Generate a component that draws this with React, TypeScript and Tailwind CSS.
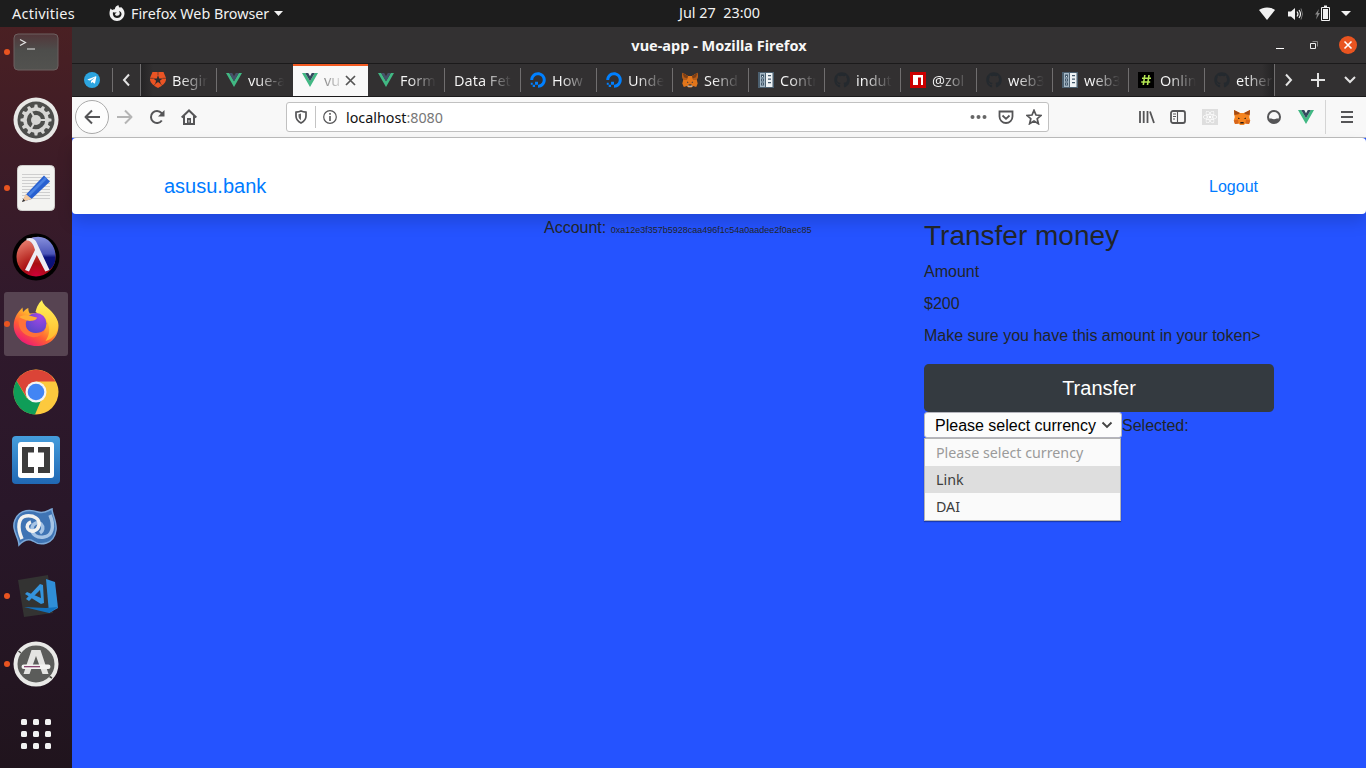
import React from "react";
import { FaDigitalOcean, FaGithub, FaReact, FaTelegramPlane } from "react-icons/fa";

const UI = "font-['Noto_Sans',sans-serif]";

function Vue({ dim = false }: { dim?: boolean }) {
  return (
    <svg width="16" height="16" viewBox="0 0 16 16" className="block shrink-0">
      <path d="M0 1h3.2L8 9.3 12.8 1H16L8 15z" fill="#41b883" />
      <path d="M3.2 1H6.2L8 4.2 9.8 1h3L8 9.3z" fill={dim ? "#45526a" : "#34495e"} />
    </svg>
  );
}

function Fox() {
  return (
    <svg width="16" height="16" viewBox="0 0 16 16" className="block shrink-0">
      <path d="M.5.8 6 4h4L15.500.8l.3 3.700-1 3.500.9 3.500-1.500 3.500-3.200-.9-1.500 1.400h-3l-1.500-1.400-3.200.9L.3 11.500 1.200 8 .2 4.500z" fill="#e2761b" />
      <path d="M.5.8 6 4 5 8 1.200 8 .2 4.500zM15.500.8 10 4l1 4 3.800 0 1-3.500z" fill="#b85d18" />
      <path d="M.5.8 6 4 5.300 6.500 2 5.300zM15.500.8 10 4l.7 2.500L14 5.300z" fill="#7d3f16" />
      <path d="M5 9.500 6.800 10.400 5 10.800zM11 9.500l-1.800.9 1.800.4z" fill="#233447" />
      <path d="M6 13h4l.5 1.900H5.500z" fill="#c0ad9e" />
      <path d="M6.600 12.500h2.800l.2 1H6.400z" fill="#26201c" />
    </svg>
  );
}

function FoxFace() {
  return (
    <svg width="18" height="16" viewBox="0 0 18 16" className="block shrink-0">
      <path d="M1 1l6 3h4l6-3 0 4-.8 3 1 3.500L16 15l-3.500-.6L10.800 16H7.200l-1.700-1.600L2 15 .8 11.500 1.800 8 1 5z" fill="#f5841f" />
      <path d="M1 1l6 3-1.500 1.200L1.500 6zM17 1l-6 3 1.500 1.200 4 .8z" fill="#a34b16" />
      <path d="M.8 11.500 5 10.500 5.500 14.400 2 15zM17.200 11.500l-4.200-1-.5 3.900 3.500.6z" fill="#d7651b" />
      <path d="M5 8.600 7.200 9.700 5.200 10zM13 8.600l-2.200 1.100 2 .3zM7.500 13h3l.4 1.600H7.100z" fill="#2b1c14" />
    </svg>
  );
}

function Auth0() {
  return (
    <svg width="16" height="16" viewBox="0 0 16 16" className="block shrink-0">
      <path d="M2.500 0h11L16 6c.6 4-2.500 7-8 10C2.500 13-.6 10 0 6z" fill="#eb5424" />
      <path d="M8 3 9.200 6.500h3.500L9.900 8.700l1.100 3.500L8 10l-3 2.200 1.100-3.500L3.300 6.500h3.500z" fill="#2f2d2e" />
      <path d="M0 6.300h3.500M16 6.300h-3.500M8 0v3M5 12.200 3.200 14M11 12.200l1.800 1.800" stroke="#2f2d2e" strokeWidth=".6" />
    </svg>
  );
}

function Docs() {
  return (
    <svg width="16" height="16" viewBox="0 0 16 16" className="block shrink-0">
      <path d="M0 0h16v16H0z" fill="#4c6070" />
      <path d="M2 1h5v14H2z" fill="#a5b8c6" />
      <path d="M8 1h6.500v14H8z" fill="#eef2f5" />
      <path d="M3 2.500h3v3H3zM3 6.500h3v3H3zM3 10.500h3v3H3zM10 3h3v1.300h-3zM10 6.500h3v1.300h-3zM10 10h3v1.300h-3z" fill="#41576a" />
      <path d="M4 4h1v1H4zM4 7.500h1v1H4zM4 11.500h1v1H4z" fill="#dce6ed" />
    </svg>
  );
}

function Npm() {
  return (
    <svg width="16" height="16" viewBox="0 0 16 16" className="block shrink-0">
      <path d="M0 0h16v16H0z" fill="#cb0000" />
      <path d="M3 3h10v10h-2V5.500H8V13H3z" fill="#fff" />
    </svg>
  );
}

function Hash() {
  return (
    <svg width="16" height="16" viewBox="0 0 16 16" className="block shrink-0">
      <path d="M0 0h16v16H0z" fill="#000" />
      <path d="M6.800 3 5.300 13M11 3 9.500 13M4 6.300h9M3.200 10h9" stroke="#b5e853" strokeWidth="1.600" />
    </svg>
  );
}

const ocean = <FaDigitalOcean size={16} color="#0080ff" />;
const hub = <FaGithub size={16} color="#24292e" />;

const tabs: { icon?: React.ReactNode; text: string; active?: boolean }[] = [
  { icon: <Auth0 />, text: "Begin" },
  { icon: <Vue dim />, text: "vue-a" },
  { icon: <Vue />, text: "vu", active: true },
  { icon: <Vue dim />, text: "Form" },
  { text: "Data Fet" },
  { icon: ocean, text: "How" },
  { icon: ocean, text: "Unde" },
  { icon: <Fox />, text: "Send" },
  { icon: <Docs />, text: "Contr" },
  { icon: hub, text: "indut" },
  { icon: <Npm />, text: "@zol" },
  { icon: hub, text: "web3" },
  { icon: <Docs />, text: "web3" },
  { icon: <Hash />, text: "Onlin" },
  { icon: hub, text: "ether" },
];

function TopBar() {
  return (
    <header className={`flex h-[27px] shrink-0 items-center bg-[#1d1d1d] text-[14.3px] text-[#f2f2f2] ${UI}`}>
      <div className="flex w-[679px] shrink-0 items-center">
        <span className="ml-3 w-[97px] whitespace-nowrap text-[14.500px] tracking-[0.25px]">Activities</span>
        <svg width="16" height="16" viewBox="0 0 16 16" className="mr-[6px] mb-px shrink-0">
          <path d="M1.500 3.500 3.200 5c1-.7 2-.9 2.600-.8C6 2.200 7.500.700 9.500 0 9.300 1.200 10 2 11 2.800l1-.8c2 1.500 3.600 3.800 3.500 6.500C15.300 12.800 12 16 8 16S.5 12.700.5 8.500C.5 6.500 1 5 1.500 3.500z" fill="#f2f2f2" />
          <path d="M4 7c1.200.8 2.300.5 3.500.3-.2 1-1.500 1.200-1.500 2.200C6.500 11 9 11.300 10.200 10c1-1.200.6-3-.4-4 2 .3 3 2 2.700 3.700-.4 2-2.200 3.300-4.500 3.300C5 13 3.300 10 4 7z" fill="#1d1d1d" />
        </svg>
        <span className="w-[138px] whitespace-nowrap">Firefox Web Browser</span>
        <svg width="9" height="5" viewBox="0 0 9 5" className="ml-[5px]"><path d="M0 0h9L4.500 5z" fill="#f2f2f2" /></svg>
      </div>
      <div className="flex-1 whitespace-pre pb-px text-[14.4px]">Jul 27  23:00</div>
      <div className="flex w-[107px] shrink-0 items-center">
        <svg width="16" height="13" viewBox="0 0 16 13"><path d="M0 3C4-.5 12-.5 16 3L8 13z" fill="#f2f2f2" /></svg>
        <svg width="15" height="14" viewBox="0 0 15 14" className="ml-[13px]">
          <path d="M0 4.500h3L7 1v12L3 9.500H0z" fill="#f2f2f2" />
          <path d="M9 4.500q2 2.500 0 5M11 3q3 4 0 8" fill="none" stroke="#f2f2f2" strokeWidth="1.200" />
          <path d="M13 1.500q3 5.500 0 11" fill="none" stroke="#777" />
        </svg>
        <svg width="15" height="16" viewBox="0 0 15 16" className="ml-3 mb-[2px]">
          <path d="M4 4 0 9.500h2l-1 5 4-6.500H3z" fill="#858585" />
          <path d="M6.500 2.500h8v13h-8z" fill="none" stroke="#f2f2f2" strokeWidth="1" />
          <path d="M9 .5h3v1.500H9zM8 4h5v10H8z" fill="#f2f2f2" />
        </svg>
        <svg width="10" height="5" viewBox="0 0 10 5" className="ml-[11px]"><path d="M0 0h10L5 5z" fill="#f2f2f2" /></svg>
      </div>
    </header>
  );
}

function DockItem({ children, dot, active }: { children: React.ReactNode; dot?: boolean; active?: boolean }) {
  return (
    <div className="flex h-[68px] w-[72px] shrink-0 items-center justify-center">
      <div className={`relative flex h-16 w-16 items-center justify-center rounded-[3px] ${active ? "bg-[#574452]" : ""}`}>
        {dot && <span className="absolute left-0 h-[6px] w-[6px] rounded-full bg-[#e95420]" />}
        {children}
      </div>
    </div>
  );
}

const teeth = Array.from({ length: 12 }, (_, i) => i * 30);

function Dock() {
  return (
    <aside className="w-[72px] shrink-0 overflow-hidden bg-[linear-gradient(180deg,#4a2023_0%,#3d1c27_18%,#30192c_38%,#291729_65%,#20141d_100%)]">
      <div className="-mt-[9px] flex flex-col">
        <DockItem dot>
          <svg width="46" height="38" viewBox="0 0 46 38">
            <defs><linearGradient id="term" x2="0" y2="1"><stop stopColor="#523639" /><stop offset=".45" stopColor="#4d4d4b" /><stop offset="1" stopColor="#52524f" /></linearGradient></defs>
            <rect x="1" y="1" width="44" height="36" rx="4" fill="url(#term)" stroke="#6d6060" />
            <path d="M7 6.500 12.500 9.500 7 12.500M14 16h8" fill="none" stroke="#e4e4e4" strokeWidth="1.200" />
          </svg>
        </DockItem>
        <DockItem>
          <svg width="46" height="46" viewBox="-23 -23 46 46">
            <circle r="22.500" fill="#e8e8e6" /><circle r="18.500" fill="#4d4e4c" />
            <circle r="11" fill="none" stroke="#d6d6d4" strokeWidth="3.500" />
            {teeth.map((a) => <path key={a} d="M-2-12-1.300-15.500h2.600L2-12z" fill="#d6d6d4" transform={`rotate(${a})`} />)}
            <circle r="5" fill="#d6d6d4" />
            <path d="M0 0H11M0 0-5.500-9.500M0 0-5.500 9.500" stroke="#d6d6d4" strokeWidth="2" />
          </svg>
        </DockItem>
        <DockItem dot>
          <svg width="38" height="46" viewBox="0 0 38 46">
            <rect x=".5" y=".5" width="37" height="45" rx="4" fill="#f3f3f1" stroke="#d0cfcd" />
            <path d="M5 9.500h28M5 12.500h28M5 15.500h28M5 18.500h28M5 21.500h28M5 24.500h28M5 27.500h28M5 30.500h28M5 33.500h28" stroke="#cecece" />
            <path d="m5 37 4-7.500L27 10.500l6 6L14.500 34z" fill="#2860d0" />
            <path d="m12 30 17-17" stroke="#4880e2" strokeWidth="2.500" /><path d="m5 37 3.800-8 6 5z" fill="#f3cba3" /><path d="m5 37 1.300-3 2 1.800z" fill="#333" />
          </svg>
        </DockItem>
        <DockItem>
          <svg width="48" height="48" viewBox="0 0 48 48" className="relative top-px">
            <defs>
              <radialGradient id="red" cx=".5" cy="1" r=".95"><stop stopColor="#d0003b" /><stop offset=".35" stopColor="#a80d12" /><stop offset=".6" stopColor="#c03830" /><stop offset="1" stopColor="#e57a6b" /></radialGradient>
              <linearGradient id="blu" x1="0" y1="0" x2="0" y2="1"><stop stopColor="#8790dd" /><stop offset=".5" stopColor="#4b55b8" /><stop offset=".6" stopColor="#0c137e" /><stop offset="1" stopColor="#0a0f70" /></linearGradient>
            </defs>
            <circle cx="24" cy="24" r="23.500" fill="#000" /><circle cx="24" cy="24" r="19.500" fill="url(#red)" />
            <path d="M17 6C32-1 44 10 43.500 24c0 7-3 11-7.500 14L25 17z" fill="url(#blu)" />
            <path d="M14.500 5.500c6-2 9.500 1 11.500 7L37.500 37l-4.200 1.500L24.800 22 17 38.500 13 37 23 17c-2-7-4-9.500-8.500-9.500z" fill="#ececf4" />
          </svg>
        </DockItem>
        <DockItem dot active>
          <svg width="48" height="48" viewBox="0 0 48 48">
            <defs>
              <linearGradient id="ff" x1=".85" y1=".15" x2=".25" y2=".95"><stop stopColor="#ffe142" /><stop offset=".35" stopColor="#ffab2d" /><stop offset=".65" stopColor="#ff5c35" /><stop offset="1" stopColor="#ee1a75" /></linearGradient>
              <linearGradient id="flame" x2="0" y2="1"><stop stopColor="#fff35a" /><stop offset="1" stopColor="#ffb72c" /></linearGradient>
              <radialGradient id="globe" cx=".7" cy=".15" r=".9"><stop stopColor="#a347e5" /><stop offset="1" stopColor="#5546c8" /></radialGradient>
            </defs>
            <path d="M4.500 15C6 12 8.500 10 10.500 7.500L11 12c1.500-1.500 3-3 5.300-4 0 2 .3 4 1.500 5.500L36 12c5 1 10.500 7 10.500 13.500C46.500 38 37 46 24.500 46S1.700 37 1.700 25.500C1.700 21 3 18 4.500 15z" fill="url(#ff)" />
            <path d="M23.500 12C25 6 27 3 30 0c1 5 5 7 9 11 5 5 8 11 6.500 18-1.500 6-6 10-12 12C38 35 39 26 33 18z" fill="url(#flame)" />
            <circle cx="24" cy="23.500" r="10.500" fill="url(#globe)" />
            <path d="M7 18c4-3 6-1 8 2-2 3-2 6 0 9 4 5 12 5 18 1-2 5-8 8-13 7C10 35 5 27 7 18z" fill="#ff7139" />
            <path d="M7 17c5-3 10-2 18 .5-.5 3-4 3-7 3.500-4-.5-7-2-11-4z" fill="#ffac33" />
          </svg>
        </DockItem>
        <DockItem>
          <svg width="46" height="46" viewBox="0 0 46 46">
            <circle cx="23" cy="23" r="22.500" fill="#fcc93e" />
            <path d="M3.500 11.800A22.500 22.500 0 0 1 42.500 12.500H23L13.500 28z" fill="#db4437" />
            <path d="M3.500 11.800 13.700 29 23 33l6-4-7 16.500A22.500 22.500 0 0 1 3.500 11.800z" fill="#0f9d58" />
            <circle cx="23" cy="23" r="10.500" fill="#f4f4f4" /><circle cx="23" cy="23" r="8.300" fill="#4285f4" />
          </svg>
        </DockItem>
        <DockItem>
          <svg width="48" height="48" viewBox="0 0 48 48">
            <defs><linearGradient id="br" x2="0" y2="1"><stop stopColor="#459ddc" /><stop offset="1" stopColor="#2068b4" /></linearGradient></defs>
            <rect width="48" height="48" rx="4" fill="url(#br)" /><rect x="6" y="6" width="36" height="36" rx="3" fill="#fff" />
            <path d="M10 11h12v5.500h-6v14.500h6v6H10zM38 11H26v5.500h6v14.500h-6v6h12z" fill="#3c3c3c" />
          </svg>
        </DockItem>
        <DockItem>
          <svg width="46" height="40" viewBox="0 0 46 40" className="relative -left-px">
            <path d="M3 12C8 0 20 2 26 4c6 2 9-1 14-3 0 5 5 13 4 21-2 15-16 16-23 11-5-3-9-1-14 4C7 29-1 22 3 12z" fill="#3f74b4" stroke="#7ba8d8" strokeWidth="1.500" />
            <path d="M38 7C43 19 40 28 32 29c-7 1-12-2-12-8 0-5 5-8 9-5 3 3 2 7-1 9" fill="none" stroke="#a6c4e5" strokeWidth="3.500" />
            <path d="M10 31C5 20 6 9 14 8c8-1 14 3 13 9-1 6-8 8-11 4-2-3 0-6 3-7" fill="none" stroke="#f2f2f0" strokeWidth="3.500" />
          </svg>
        </DockItem>
        <DockItem dot>
          <svg width="42" height="44" viewBox="0 0 42 44" className="relative left-[2px]">
            <path d="M1 6 31 1 36 39 7 43z" fill="#333332" />
            <path d="m29 5 9 3 3 26-9 5z" fill="#2f8ed8" /><path d="M7 33 29 34l12-1-9 6z" fill="#1371bd" />
            <path d="m23 10 3 1 1 18-3 1-16-10 2-2 14 6-1-8-11 11-3-2z" fill="#3494dc" />
          </svg>
        </DockItem>
        <DockItem dot>
          <svg width="46" height="46" viewBox="0 0 46 46">
            <circle cx="23" cy="23" r="20.500" fill="#5b5c5a" stroke="#e9e9e7" strokeWidth="4" />
            <path d="M5.500 10 8 12M36.500 35.500l2.500 1.500" stroke="#4a4a48" strokeWidth="1.500" />
            <path d="m10.500 33 8-24h9l8 24h-6L23 15l-6.500 18z" fill="#e4e4e2" />
            <rect x="8.500" y="23.500" width="29" height="4.500" rx="2.200" fill="#f3f3f1" /><path d="M11 25.700h16" stroke="#7c3463" strokeWidth="1.200" />
          </svg>
        </DockItem>
        <div className="flex h-[72px] items-center justify-center">
          <div className="grid grid-cols-3 gap-[6px]">
            {teeth.slice(0, 9).map((k) => <span key={k} className="h-[6px] w-[6px] rounded-[1.5px] bg-[#f2f2f2]" />)}
          </div>
        </div>
      </div>
    </aside>
  );
}

function TabStrip() {
  return (
    <div className={`flex h-[34px] shrink-0 overflow-hidden border-y border-[#1b1a1b] bg-[#323031] text-[14.500px] text-[#f7f7f7] ${UI}`}>
      <div className="flex w-10 shrink-0 items-center pl-3">
        <span className="flex h-4 w-4 items-center justify-center rounded-full bg-[#2ca5e0]"><FaTelegramPlane size={10} color="#fff" /></span>
      </div>
      <div className="my-1 w-px shrink-0 bg-[#706e6f]" />
      <div className="flex w-[27px] shrink-0 items-center justify-center">
        <svg width="8" height="14" viewBox="0 0 8 14" className="relative -left-px"><path d="M7 1.500 2 7l5 5.500" fill="none" stroke="#e3e3e3" strokeWidth="2" /></svg>
      </div>
      <div className="w-px shrink-0 bg-[#706e6f]" />
      <div className="flex w-[1133px] shrink-0 overflow-hidden bg-[linear-gradient(90deg,#252425,#323031_12px,#323031_1121px,#252425)]">
        {tabs.map((t, i) =>
          t.active ? (
            <div key={i} className="mr-px flex w-[75px] shrink-0 items-center border-t-2 border-[#f25a22] bg-[#f8f8f8] pb-[2px] pl-[9px]">
              {t.icon}
              <span className="ml-[6px] w-[18px] whitespace-nowrap bg-[linear-gradient(90deg,#888_0%,#bbb_60%,#e5e5e5_100%)] bg-clip-text pt-[2px] text-transparent">{t.text}</span>
              <svg width="11" height="11" viewBox="0 0 11 11" className="ml-[3px] mt-px"><path d="m1 1 9 9M10 1l-9 9" stroke="#555" strokeWidth="1.700" /></svg>
            </div>
          ) : (
            <div key={i} className="flex w-[76px] shrink-0 items-center pl-[9px]">
              {t.icon && <span className="mr-[6px] w-4">{t.icon}</span>}
              <span className={`w-0 flex-1 whitespace-nowrap bg-clip-text pt-[2px] text-transparent ${t.icon ? "bg-[linear-gradient(90deg,#f7f7f7_0%,#f7f7f7_25%,#323031_100%)]" : "bg-[linear-gradient(90deg,#f7f7f7_0%,#f7f7f7_50%,#323031_100%)]"}`}>{t.text}</span>
              <span className={`ml-[8px] h-6 w-px ${i === 1 || i === 14 ? "" : "bg-[#706e6f]"}`} />
            </div>
          )
        )}
      </div>
      <div className="w-px shrink-0 bg-[#706e6f]" />
      <div className="flex flex-1 items-center">
        <svg width="8" height="14" viewBox="0 0 8 14" className="ml-[10px]"><path d="M1 1.500 6 7l-5 5.500" fill="none" stroke="#e3e3e3" strokeWidth="2" /></svg>
        <svg width="14" height="14" viewBox="0 0 14 14" className="ml-[18px]"><path d="M7 0v14M0 7h14" stroke="#e3e3e3" strokeWidth="2" /></svg>
        <svg width="12" height="8" viewBox="0 0 12 8" className="ml-[19px]"><path d="M1 1l5 5 5-5" fill="none" stroke="#e3e3e3" strokeWidth="2" /></svg>
      </div>
    </div>
  );
}

function Toolbar() {
  const s = { fill: "none", stroke: "#555557", strokeWidth: 2 } as const;
  return (
    <div className={`flex h-[41px] shrink-0 items-center border-b border-[#bdbdbd] bg-[#f8f8f8] ${UI}`}>
      <div className="flex w-[214px] shrink-0 items-center pl-[3px]">
        <span className="flex h-[34px] w-[34px] items-center justify-center rounded-full border border-[#aaa] bg-[#fdfdfd]">
          <svg width="16" height="16" viewBox="0 0 16 16"><path d="M16 8H2M8 1.500 1.500 8 8 14.500" {...s} strokeLinejoin="round" /></svg>
        </span>
        <svg width="16" height="16" viewBox="0 0 16 16" className="ml-2"><path d="M0 8h14M8 1.500 14.500 8 8 14.500" {...s} stroke="#b5b5b5" strokeLinejoin="round" /></svg>
        <svg width="16" height="16" viewBox="0 0 16 16" className="ml-4"><path d="M12.800 11.500A6 6 0 1 1 12.500 4L14 6" {...s} /><path d="M15.500 1v6.500H9z" fill="#555557" /></svg>
        <svg width="16" height="16" viewBox="0 0 16 16" className="ml-4"><path d="M.7 8.500 8 1.500l7.300 7M3 7v8h10V7" {...s} /><path d="M6 9h4v6H6z" fill="#555557" /><path d="M8 11v2.500" stroke="#ddd" /></svg>
      </div>
      <div className="flex h-[30px] w-[763px] shrink-0 items-center rounded-[3px] border border-[#c1c1c1] bg-white">
        <svg width="12" height="14" viewBox="0 0 12 14" className="ml-2"><path d="M1 2.200Q4 2 6 1q2 1 5 1.200V6c0 3.500-2 5.500-5 7-3-1.500-5-3.500-5-7z" {...s} strokeWidth="1.700" /><path d="M6 3.500v6.800C4.300 9 3.500 8 3.500 6V4.200z" fill="#666" /></svg>
        <span className="ml-[8px] h-[22px] w-px bg-[#c4c4c4]" />
        <svg width="14" height="14" viewBox="0 0 14 14" className="ml-[7px]"><circle cx="7" cy="7" r="6.300" {...s} strokeWidth="1.200" /><path d="M7 6v5M7 3v1.700" {...s} strokeWidth="1.600" /></svg>
        <span className="ml-[9px] whitespace-nowrap pt-[2px] text-[14.3px] text-[#111]">localhost<span className="text-[#777]">:8080</span></span>
        <div className="flex flex-1 items-center justify-end pr-[6px]">
          <svg width="17" height="6" viewBox="0 0 17 6"><circle cx="2.500" cy="3" r="2" fill="#666" /><circle cx="8.500" cy="3" r="2" fill="#666" /><circle cx="14.500" cy="3" r="2" fill="#666" /></svg>
          <svg width="16" height="15" viewBox="0 0 16 15" className="ml-[11px]"><path d="M1.500 1.500h13V6.500a6.500 6.500 0 0 1-13 0zM4.500 5.500 8 8.800l3.500-3.300" {...s} strokeWidth="1.800" /></svg>
          <svg width="16" height="16" viewBox="0 0 16 16" className="ml-3"><path d="m8 1.300 2 4.700 5 .4-3.800 3.300 1.200 5L8 12l-4.400 2.700 1.200-5L1 6.400 6 6z" {...s} strokeWidth="1.700" /></svg>
        </div>
      </div>
      <div className="flex flex-1 items-center pl-[90px]">
        <svg width="16" height="14" viewBox="0 0 16 14"><path d="M1 1v12M4.700 1v12M8.500 1v12M11 1.500 15 13" {...s} strokeWidth="1.800" /></svg>
        <svg width="16" height="14" viewBox="0 0 16 14" className="ml-[15px]"><rect x="1" y="1" width="14" height="12" rx="2" {...s} strokeWidth="1.800" /><path d="M7.500 1v12M3 4h3M3 6.500h3M3 9h2" {...s} strokeWidth="1.100" /></svg>
        <span className="ml-4 flex h-4 w-4 items-center justify-center bg-[#dedede]"><FaReact size={14} color="#fff" /></span>
        <span className="ml-[15px]"><FoxFace /></span>
        <svg width="14" height="14" viewBox="0 0 14 14" className="ml-4"><circle cx="7" cy="7" r="6" {...s} /><path d="M2 8.500h10Q11 13 7 13T2 8.500" fill="#555557" /><circle cx="7" cy="6.300" r="2.900" fill="#f8f8f8" /></svg>
        <span className="ml-[17px]"><Vue /></span>
        <span className="ml-[11px] h-[34px] w-px bg-[#d5d5d5]" />
        <svg width="12" height="12" viewBox="0 0 12 12" className="ml-[15px]"><path d="M0 1h12M0 6h12M0 11h12" {...s} strokeWidth="1.800" /></svg>
      </div>
    </div>
  );
}

function Page() {
  return (
    <main className="flex flex-1 flex-col bg-[#2553ff] font-['Liberation_Sans',sans-serif] text-base text-[#212529]">
      <nav className="z-0 flex h-[76px] items-center justify-between rounded-[4px] bg-white pr-[108px] pl-[92px] pt-5 text-[#007bff] shadow-[0_8px_16px_rgba(0,0,0,0.15)]">
        <a className="text-xl">asusu.bank</a>
        <a className="pt-[2px] text-base">Logout</a>
      </nav>
      <div className="z-10 flex w-[1140px] self-center">
        <div className="w-[380px]" />
        <div className="w-[380px] px-[15px] pt-[2px] leading-6">Account: <small className="text-[9px]">0xa12e3f357b5928caa496f1c54a0aadee2f0aec85</small></div>
        <div className="w-[380px] px-[15px] pt-[5px]">
          <h2 className="mb-[7px] text-[28px] leading-[34px]">Transfer money</h2>
          <p className="mb-2 leading-6">Amount</p>
          <p className="mb-2 leading-6">$200</p>
          <p className="mb-4 leading-6">Make sure you have this amount in your token&gt;</p>
          <button className="block h-12 w-full rounded-[4.800px] bg-[#343a40] text-xl text-white">Transfer</button>
          <div className="flex">
            <div className="w-[198px]">
              <button className="flex h-[26px] w-full items-center rounded-[3px] border border-[#b5b5bd] bg-[#fcfcfc] pl-[10px] text-black">
                <span className="whitespace-nowrap pt-[2px]">Please select currency</span>
                <svg width="12" height="8" viewBox="0 0 12 8" className="ml-[5px]"><path d="m1.500 1.500 4.500 4.500 4.500-4.500" fill="none" stroke="#444" strokeWidth="1.900" /></svg>
              </button>
              <ul className={`w-[197px] border border-[#b4b4b4] bg-[#fafafa] text-[14.25px] leading-[27px] text-[#3d3d3d] shadow-[0_1px_1px_rgba(0,0,0,0.3)] ${UI}`}>
                <li className="h-[27px] pl-[11px] text-[#9a9a9a]">Please select currency</li>
                <li className="h-[27px] bg-[#dedede] pl-[11px]">Link</li>
                <li className="h-[27px] pl-[11px]">DAI</li>
              </ul>
            </div>
            <span className="h-[26px] leading-[28px]">Selected:</span>
          </div>
        </div>
      </div>
    </main>
  );
}

export default function App() {
  return (
    <div className="flex h-[768px] w-[1366px] flex-col overflow-hidden">
      <TopBar />
      <div className="flex min-h-0 flex-1">
        <Dock />
        <section className="flex min-w-0 flex-1 flex-col">
          <div className={`flex h-9 shrink-0 items-center bg-[#333132] ${UI}`}>
            <div className="w-[200px]" />
            <div className="flex-1 pt-[2px] text-center text-[14.500px] font-bold text-[#f7f7f7]">vue-app - Mozilla Firefox</div>
            <div className="flex w-[200px] items-center justify-end pr-[9px]">
              <span className="mt-[6px] h-px w-2 bg-white" />
              <svg width="8" height="8" viewBox="0 0 8 8" className="ml-[26px]"><path d="M.5 2.500h5v5h-5z" fill="none" stroke="#eee" /><path d="M2.500.500h5v5" fill="none" stroke="#888" /></svg>
              <svg width="18" height="18" viewBox="0 0 18 18" className="ml-[21px]"><circle cx="9" cy="9" r="9" fill="#e95420" /><path d="m5.500 5.500 7 7m0-7-7 7" stroke="#fff" strokeWidth="1.600" /></svg>
            </div>
          </div>
          <TabStrip />
          <Toolbar />
          <Page />
        </section>
      </div>
    </div>
  );
}
